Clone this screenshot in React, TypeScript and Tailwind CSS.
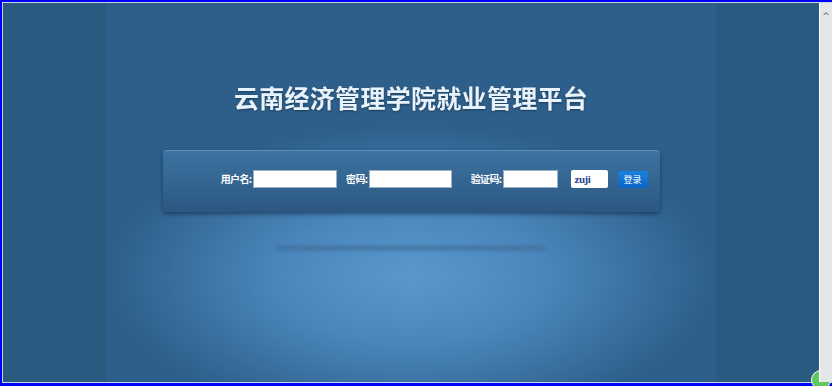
import React from "react";

const labelCls = "text-[10px] text-white font-bold leading-none whitespace-nowrap tracking-[-0.6px] flex justify-end";

export default function App() {
  return (
    <div className="w-[832px] h-[386px] bg-[#0000ff] pt-[2px] pl-[2px] pb-[3px] flex overflow-hidden" style={{ fontFamily: '"Noto Sans CJK SC", "Noto Sans", sans-serif' }}>
      <div className="flex-1 flex border-t border-l border-b border-[#c8d4e0] bg-[#2b5a80]">
        {/* page body */}
        <div className="flex-1 flex justify-center relative">
          <div className="w-[610px] h-full bg-[radial-gradient(ellipse_300px_150px_at_50%_72%,#5a98cc_0%,#4a86bb_45%,#2e5f8a_100%)] flex flex-col items-center">
            <h1 className="mt-[82px] text-[25px] font-bold text-[#e8f2fb] tracking-[0.3px] leading-none drop-shadow-[0_1px_1px_rgba(0,0,0,0.35)]">
              云南经济管理学院就业管理平台
            </h1>

            <div className="mt-[40px] w-[497px] h-[62px] rounded-[4px] border-t border-[#5d8fbd] bg-[linear-gradient(180deg,#3d72a1_0%,#33648f_55%,#2b5780_100%)] shadow-[0_2px_4px_rgba(10,30,55,0.55)] flex items-start pt-[19px] pl-[57px]">
              <div className="flex items-center h-[18px]">
                <span className={`${labelCls} w-[32px]`}>用户名:</span>
                <div className="ml-[1px] w-[84px] h-[18px] bg-white border border-[#9bb0c4]" />
                <span className={`${labelCls} w-[22px] ml-[9px]`}>密码:</span>
                <div className="ml-[1px] w-[83px] h-[18px] bg-white border border-[#9bb0c4]" />
                <span className={`${labelCls} w-[31px] ml-[19px]`}>验证码:</span>
                <div className="ml-[1px] w-[55px] h-[18px] bg-white border border-[#9bb0c4]" />
                <div className="ml-[13px] w-[37px] h-[18px] bg-white rounded-[2px] flex items-center pl-[4px]">
                  <span className="text-[11px] font-bold text-[#2a3f8f] leading-none tracking-[-0.5px]" style={{ fontFamily: '"Liberation Serif", serif' }}>zuji</span>
                </div>
                <div className="ml-[10px] w-[30px] h-[17px] rounded-[2px] bg-[linear-gradient(180deg,#1a82e0_0%,#0a62c4_100%)] flex items-center justify-center">
                  <span className="text-[9px] text-white leading-none">登录</span>
                </div>
              </div>
            </div>

            <div className="mt-[34px] w-[270px] h-[4px] rounded-full bg-[#3c6a93] blur-[2px] opacity-80" />
          </div>
          <div className="absolute right-[-12px] bottom-[-8px] w-[20px] h-[20px] rounded-full bg-[#5fc85f] border border-white" />
        </div>
        {/* scrollbar */}
        <div className="w-[13px] border-l border-white bg-[#e4e6e8] flex flex-col items-center pt-[9px] relative z-0">
          <span className="text-[9px] text-[#555] leading-none" style={{ fontFamily: '"DejaVu Sans", sans-serif' }}>^</span>
        </div>
      </div>
    </div>
  );
}
